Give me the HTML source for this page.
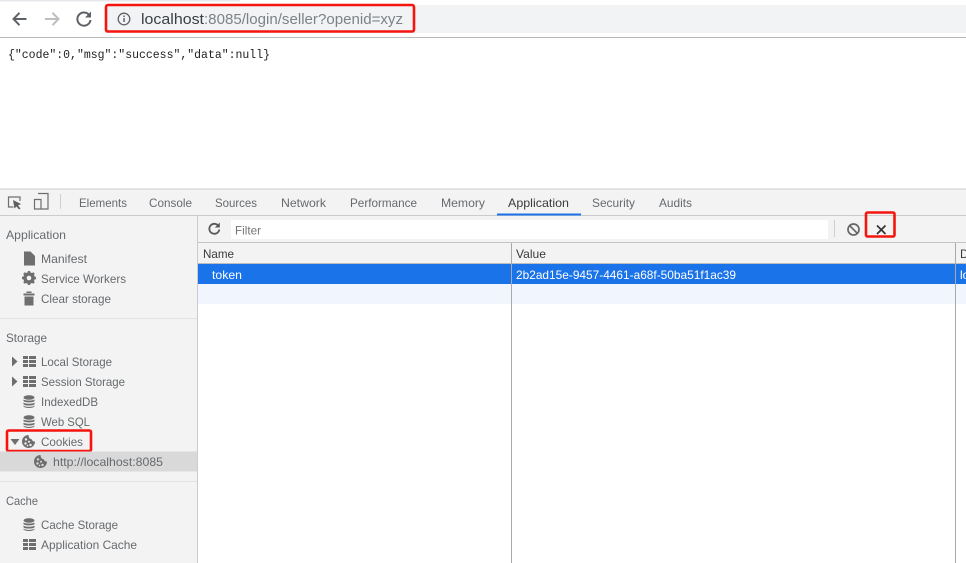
<!DOCTYPE html>
<html><head><meta charset="utf-8"><style>
html,body{margin:0;padding:0;background:#fff;width:966px;height:563px;overflow:hidden}
svg{display:block}
text{font-family:"Liberation Sans",sans-serif;font-size:12px;fill:#666a6e}
.d{fill:#3a3a3a}
.w{fill:#fff}
.i{fill:#6e6e6e}
</style></head><body>
<svg width="966" height="563" viewBox="0 0 966 563" xmlns="http://www.w3.org/2000/svg">
<defs>
<g id="db"><ellipse cx="6" cy="2.500" rx="5.500" ry="2.300"/><path d="M.5 4.200C1.500 6 10.500 6 11.500 4.200V6C10.500 7.800 1.500 7.800 .5 6Z"/><path d="M.5 7.400C1.500 9.200 10.500 9.200 11.500 7.400V9.200C10.500 11 1.500 11 .5 9.200Z"/><path d="M.5 10.500C1.500 12.300 10.500 12.300 11.500 10.500V11.500C10 13.500 2 13.500 .5 11.500Z"/></g>
<g id="gr"><rect x="0" y="0" width="5" height="3"/><rect x="6" y="0" width="7" height="3"/><rect x="0" y="4" width="5" height="3"/><rect x="6" y="4" width="7" height="3"/><rect x="0" y="8" width="5" height="3"/><rect x="6" y="8" width="7" height="3"/></g>
<g id="ck"><path fill-rule="evenodd" d="M6.500 0A6.500 6.500 0 1 0 13 6.500C11.500 6.500 10 5.800 9.800 4.200C8 4.300 6.500 2.500 6.500 0ZM4 3.200a1.200 1.200 0 1 1-.01 0ZM3.500 7.200a1.200 1.200 0 1 1-.01 0ZM7 5.800a1 1 0 1 1-.01 0ZM8.500 8.700a1.200 1.200 0 1 1-.01 0ZM5.500 9.800a.8.8 0 1 1-.01 0Z"/></g>
</defs>

<!-- browser chrome -->
<rect x="0" y="0" width="240" height="1.500" fill="#e6e8ec"/>
<rect x="105" y="5" width="861" height="28" fill="#f1f3f4"/>
<rect x="0" y="37" width="966" height="1" fill="#b8b8b8"/>
<path d="M26.500 19H14M19.500 12.800L13.500 19L19.500 25.200" fill="none" stroke="#5f6368" stroke-width="2"/>
<path d="M45 19H58M52.500 12.800L58.500 19L52.500 25.200" fill="none" stroke="#bcbec0" stroke-width="2"/>
<path d="M89.500 15.500A6.600 6.600 0 1 0 90.500 20" fill="none" stroke="#5f6368" stroke-width="2"/>
<path d="M91 11.500V17.500H85Z" fill="#5f6368"/>
<circle cx="124" cy="19" r="5.800" fill="none" stroke="#5f6368" stroke-width="1.300"/>
<rect x="123.300" y="18" width="1.500" height="4" fill="#5f6368"/><rect x="123.300" y="15.500" width="1.500" height="1.500" fill="#5f6368"/>
<text x="141" y="24" style="font-size:14.500px;fill:#3b3f44" textLength="63" lengthAdjust="spacingAndGlyphs">localhost</text>
<text x="204" y="24" style="font-size:14.500px;fill:#7d8287" textLength="199" lengthAdjust="spacingAndGlyphs">:8085/login/seller?openid=xyz</text>
<rect x="106" y="5" width="308" height="26.500" rx="2" fill="none" stroke="#f5150f" stroke-width="2.600"/>

<!-- page -->
<text x="8" y="58" style="font-family:'Liberation Mono',monospace;font-size:12px;fill:#222" textLength="262" lengthAdjust="spacingAndGlyphs">{"code":0,"msg":"success","data":null}</text>

<!-- devtools toolbar -->
<rect x="0" y="189" width="966" height="374" fill="#f3f3f3"/>
<rect x="0" y="188.500" width="966" height="1" fill="#cccccc"/>
<rect x="0" y="215" width="966" height="1" fill="#cccccc"/>
<path d="M13.500 207H8.500V197H20V201" fill="none" stroke="#6e6e6e" stroke-width="1.200"/>
<path d="M13 200L21 204L18 205.500L20.500 208.500L19 209.500L16.500 206.500L14.500 208.500Z" fill="#5f5f5f"/>
<path d="M38 193.500H48V209H41M34.500 199.500H41V209H34.500Z" fill="none" stroke="#6e6e6e" stroke-width="1.200"/>
<rect x="60" y="194" width="1" height="15" fill="#cfcfcf"/>
<text x="79" y="207" textLength="48" lengthAdjust="spacingAndGlyphs">Elements</text>
<text x="149" y="207" textLength="43" lengthAdjust="spacingAndGlyphs">Console</text>
<text x="215" y="207" textLength="42" lengthAdjust="spacingAndGlyphs">Sources</text>
<text x="281" y="207" textLength="45" lengthAdjust="spacingAndGlyphs">Network</text>
<text x="350" y="207" textLength="67" lengthAdjust="spacingAndGlyphs">Performance</text>
<text x="441" y="207" textLength="44" lengthAdjust="spacingAndGlyphs">Memory</text>
<text x="508" y="207" class="d" textLength="61" lengthAdjust="spacingAndGlyphs">Application</text>
<rect x="497" y="213.500" width="84" height="2" fill="#1a73e8"/>
<text x="592" y="207" textLength="43" lengthAdjust="spacingAndGlyphs">Security</text>
<text x="659" y="207" textLength="33" lengthAdjust="spacingAndGlyphs">Audits</text>

<!-- main panel -->
<rect x="197" y="216" width="1" height="347" fill="#cccccc"/>
<rect x="198" y="242" width="768" height="1" fill="#c4c4c4"/>
<path d="M218.500 226A5 5 0 1 0 219.300 229.500" fill="none" stroke="#5a5a5a" stroke-width="1.800"/>
<path d="M219.800 222.500V227.500H214.800Z" fill="#5a5a5a"/>
<rect x="231" y="220" width="597" height="19" fill="#fff"/>
<text x="235" y="234.500" style="fill:#757575" textLength="26" lengthAdjust="spacingAndGlyphs">Filter</text>
<rect x="834" y="220" width="1" height="17" fill="#cfcfcf"/>
<circle cx="853.500" cy="229.500" r="5.500" fill="none" stroke="#666" stroke-width="1.700"/>
<path d="M849.700 225.700L857.300 233.300" stroke="#666" stroke-width="1.700"/>
<path d="M877 225.500L885.500 234M885.500 225.500L877 234" stroke="#333" stroke-width="1.700"/>
<rect x="866" y="212.500" width="28.500" height="24" rx="1.500" fill="none" stroke="#f5150f" stroke-width="2.600"/>

<!-- table -->
<rect x="198" y="264" width="768" height="299" fill="#fff"/>
<rect x="198" y="263" width="768" height="1" fill="#bdbdbd"/>
<rect x="198" y="264" width="768" height="20" fill="#1a73e8"/>
<rect x="198" y="284" width="768" height="20" fill="#f0f5fe"/>
<rect x="511" y="243" width="1" height="320" fill="#a9a9a9"/>
<rect x="955" y="243" width="1" height="320" fill="#a9a9a9"/>
<text x="203" y="258" class="d" textLength="31" lengthAdjust="spacingAndGlyphs">Name</text>
<text x="516" y="258" class="d" textLength="30" lengthAdjust="spacingAndGlyphs">Value</text>
<text x="960" y="258" class="d">D</text>
<text x="212" y="279" class="w" textLength="30" lengthAdjust="spacingAndGlyphs">token</text>
<text x="516" y="279" class="w" textLength="220" lengthAdjust="spacingAndGlyphs">2b2ad15e-9457-4461-a68f-50ba51f1ac39</text>
<text x="960" y="279" class="w">lo</text>

<!-- sidebar -->
<text x="6" y="239" textLength="60" lengthAdjust="spacingAndGlyphs">Application</text>
<path d="M24 251.500H30.500L35 256V265.500H24Z" class="i"/>
<text x="41" y="263" textLength="46" lengthAdjust="spacingAndGlyphs">Manifest</text>
<circle cx="29" cy="278" r="4.300" fill="none" stroke="#6e6e6e" stroke-width="3"/>
<path d="M29 271V285M22 278H36M24 273L34 283M34 273L24 283" stroke="#6e6e6e" stroke-width="2.400"/>
<circle cx="29" cy="278" r="2.300" fill="#f3f3f3"/>
<path d="M23.500 293.500H34.500V295.500H23.500ZM26.500 291.500H31.500V293H26.500ZM24.500 296.500H33.500V305.500H24.500Z" class="i"/>
<text x="41" y="283" textLength="85" lengthAdjust="spacingAndGlyphs">Service Workers</text>
<text x="41" y="303" textLength="70" lengthAdjust="spacingAndGlyphs">Clear storage</text>
<rect x="0" y="318" width="197" height="1" fill="#e2e2e2"/>

<text x="6" y="342" textLength="41" lengthAdjust="spacingAndGlyphs">Storage</text>
<path d="M12 356.500L17.500 361.500L12 366.500Z" class="i"/>
<use href="#gr" x="23" y="356" class="i"/>
<text x="41" y="366" textLength="71" lengthAdjust="spacingAndGlyphs">Local Storage</text>
<path d="M12 376.500L17.500 381.500L12 386.500Z" class="i"/>
<use href="#gr" x="23" y="376" class="i"/>
<text x="41" y="386" textLength="84" lengthAdjust="spacingAndGlyphs">Session Storage</text>
<use href="#db" x="23" y="395" class="i"/>
<text x="41" y="406" textLength="57" lengthAdjust="spacingAndGlyphs">IndexedDB</text>
<use href="#db" x="23" y="415" class="i"/>
<text x="41" y="426" textLength="49" lengthAdjust="spacingAndGlyphs">Web SQL</text>
<path d="M10.500 439H19.500L15 445Z" class="i"/>
<use href="#ck" x="22" y="435" class="i"/>
<text x="41" y="446" textLength="42" lengthAdjust="spacingAndGlyphs">Cookies</text>
<rect x="7" y="430.500" width="84" height="20.500" rx="1.500" fill="none" stroke="#f5150f" stroke-width="2.600"/>
<rect x="0" y="451.500" width="197" height="20" fill="#d9d9d9"/>
<use href="#ck" x="34" y="455" class="i"/>
<text x="53" y="466" textLength="110" lengthAdjust="spacingAndGlyphs">http://localhost:8085</text>
<rect x="0" y="481" width="197" height="1" fill="#e2e2e2"/>

<text x="6" y="505" textLength="32" lengthAdjust="spacingAndGlyphs">Cache</text>
<use href="#db" x="23" y="518" class="i"/>
<text x="41" y="529" textLength="77" lengthAdjust="spacingAndGlyphs">Cache Storage</text>
<use href="#gr" x="23" y="539" class="i"/>
<text x="41" y="549" textLength="96" lengthAdjust="spacingAndGlyphs">Application Cache</text>
</svg>
</body></html>
